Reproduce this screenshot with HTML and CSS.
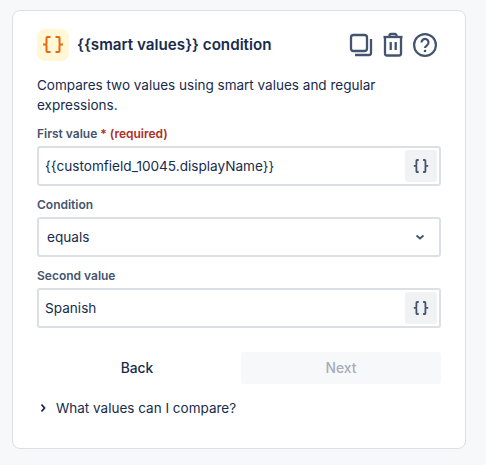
FILE: index.html
```html
<!DOCTYPE html>
<html lang="en">
<head>
<meta charset="utf-8">
<title>Smart values condition</title>
<link rel="stylesheet" href="styles.css">
</head>
<body>
<main class="card">
  <header class="head">
    <span class="tile">
      <svg width="24" height="24" viewBox="0 0 24 24" fill="none" stroke="#e56910" stroke-width="2"><path d="M9.500 4H6.500a1 1 0 0 0-1 1V10.500a1 1 0 0 1-1 1H2M4.500 11.500a1 1 0 0 1 1 1V18a1 1 0 0 0 1 1h3"/><path d="M14.500 4h3a1 1 0 0 1 1 1V10.500a1 1 0 0 0 1 1H22M19.500 11.500a1 1 0 0 0-1 1V18a1 1 0 0 1-1 1h-3"/></svg>
    </span>
    <h1 class="title">{{smart values}} condition</h1>
    <div class="actions">
      <svg class="act" width="24" height="24" viewBox="0 0 24 24" fill="none" stroke="#44546f" stroke-width="2.300"><rect x="2" y="2" width="16" height="16" rx="2.500"/><path d="M22 6v14a2 2 0 0 1-2 2H6"/></svg>
      <svg class="act" width="24" height="24" viewBox="0 0 24 24" fill="none" stroke="#44546f" stroke-width="2.300"><path d="M2.500 4h19"/><path d="M8.500 4V2.500a1.500 1.500 0 0 1 1.500-1.500h4a1.500 1.500 0 0 1 1.500 1.500V4"/><path d="M4 4v16.500A2 2 0 0 0 6 22.500h12a2 2 0 0 0 2-2V4"/><path d="M9.700 9v8M14.700 9v8"/></svg>
      <svg class="act" width="24" height="24" viewBox="0 0 24 24" fill="none" stroke="#44546f" stroke-width="2.200"><circle cx="12" cy="12" r="10.900"/><path d="M8.500 9.500a3.500 3.500 0 1 1 5.500 2.800c-1.200.8-2 1.400-2 2.700"/><circle cx="12" cy="18" r="1.300" fill="#44546f" stroke="none"/></svg>
    </div>
  </header>
  <p class="desc">Compares two values using smart values and regular expressions.</p>

  <div class="field first">
    <div class="label">First value<span class="req"> * (required)</span></div>
    <div class="box">
      <span class="val">{{customfield_10045.displayName}}</span>
      <span class="sv"><svg width="18" height="18" viewBox="0 0 18 18" fill="none" stroke="#44546f" stroke-width="1.800"><path d="M6.700 3H5.200a.8.800 0 0 0-.8.800V8a.8.800 0 0 1-.8.800H1.800M3.600 8.800a.8.800 0 0 1 .8.800V14.200a.8.800 0 0 0 .8.800H6.700"/><path d="M11.100 3H12.600a.8.800 0 0 1 .8.800V8a.8.800 0 0 0 .8.800H16.200M14.200 8.800a.8.800 0 0 0-.8.800V14.200a.8.800 0 0 1-.8.800H11.100"/></svg></span>
    </div>
  </div>

  <div class="field">
    <div class="label">Condition</div>
    <div class="box select">
      <span class="val">equals</span>
      <svg class="chev" width="12" height="12" viewBox="0 0 12 12" fill="none" stroke="#44546f" stroke-width="1.800"><path d="M2.500 4.500 6 7.500l3.500-3"/></svg>
    </div>
  </div>

  <div class="field">
    <div class="label">Second value</div>
    <div class="box">
      <span class="val">Spanish</span>
      <span class="sv"><svg width="18" height="18" viewBox="0 0 18 18" fill="none" stroke="#44546f" stroke-width="1.800"><path d="M6.700 3H5.200a.8.800 0 0 0-.8.800V8a.8.800 0 0 1-.8.800H1.800M3.600 8.800a.8.800 0 0 1 .8.800V14.200a.8.800 0 0 0 .8.800H6.700"/><path d="M11.100 3H12.600a.8.800 0 0 1 .8.800V8a.8.800 0 0 0 .8.800H16.200M14.200 8.800a.8.800 0 0 0-.8.800V14.200a.8.800 0 0 1-.8.800H11.100"/></svg></span>
    </div>
  </div>

  <div class="btns">
    <button class="btn back">Back</button>
    <button class="btn next" disabled>Next</button>
  </div>

  <div class="more">
    <svg width="12" height="12" viewBox="0 0 12 12" fill="none" stroke="#172b4d" stroke-width="1.800"><path d="M4.500 2.500 7.500 6l-3 3.500"/></svg>
    <span>What values can I compare?</span>
  </div>
</main>
</body>
</html>
```
FILE: styles.css
```css
* { box-sizing: border-box; }
html, body { margin: 0; height: 100%; }
body {
  background: #f7f8f9;
  padding: 10px 20px 0 12px;
  font-family: Inter, "Liberation Sans", sans-serif;
  color: #172b4d;
  font-size: 14px;
  overflow: hidden;
}
.card {
  height: 439px;
  background: #fff;
  border: 1px solid #dcdfe4;
  border-radius: 8px;
  padding: 18px 24px 0;
}
.head { display: flex; align-items: center; height: 32px; }
.tile {
  width: 32px; height: 32px;
  background: #fff7d6;
  border-radius: 8px;
  display: flex; align-items: center; justify-content: center;
  flex: none;
}
.title {
  margin: 0 0 0 8px;
  font-size: 15.200px;
  font-weight: 600;
  line-height: 20px;
  flex: 1;
}
.actions { display: flex; gap: 8px; margin-right: 4px; }
.act { display: block; overflow: visible; }
.desc { margin: 14px 0 0; line-height: 20px; font-size: 13.520px; }
.field { margin-top: 11px; }
.field.first { margin-top: 11px; }
.label {
  font-size: 12px;
  font-weight: 600;
  line-height: 16px;
  color: #44546f;
  margin-bottom: 4px;
}
.req { color: #ae2e24; }
.box {
  height: 40px;
  border: 2px solid #dcdfe4;
  border-radius: 3px;
  display: flex;
  align-items: center;
  padding: 0 2px 0 6px;
  justify-content: space-between;
  font-size: 13.600px;
}
.val { line-height: 20px; }
.select { padding: 0 13px 0 8px; }
.sv {
  width: 32px; height: 32px;
  background: #f1f2f4;
  border-radius: 3px;
  display: flex; align-items: center; justify-content: center;
}
.chev { display: block; }
.btns { display: flex; gap: 4px; margin-top: 24px; }
.btn {
  flex: 1;
  height: 32px;
  border: 0;
  border-radius: 3px;
  background: transparent;
  font: 500 13.800px Inter, "Liberation Sans", sans-serif;
  color: #172b4d;
}
.next { background: #f7f8f9; color: #a5adba; }
.more { display: flex; align-items: center; gap: 7px; margin-top: 14px; line-height: 20px; font-size: 13.500px; }
.more svg { display: block; }
```
